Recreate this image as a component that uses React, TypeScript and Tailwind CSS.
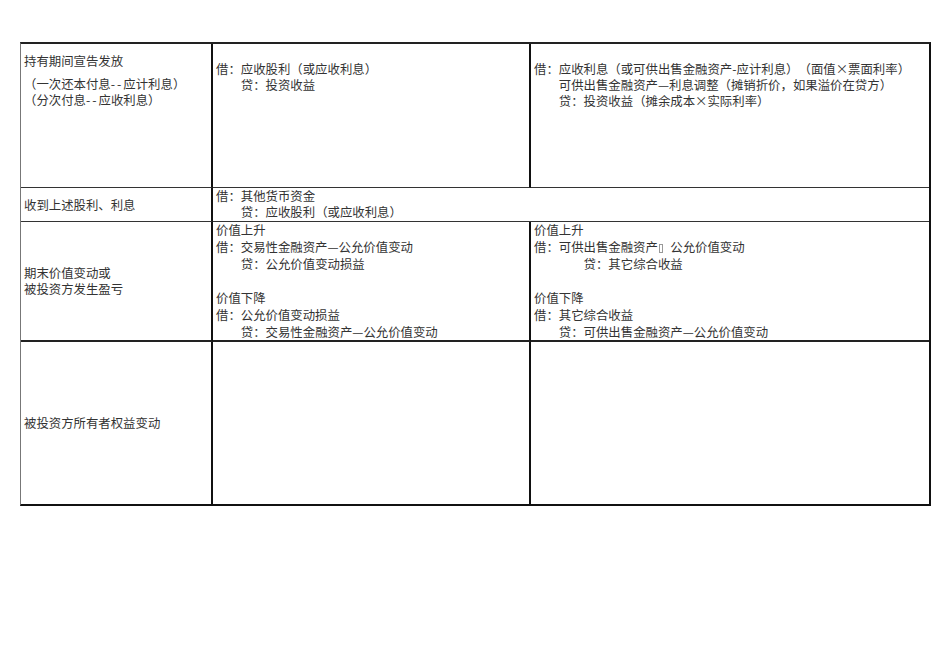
import React from "react";

function Tofu() {
  return (
    <span className="inline-flex w-[12.4px] items-center align-middle">
      <span className="ml-[1px] inline-block h-[9px] w-[4px] border border-[#999]" />
    </span>
  );
}

export default function App() {
  return (
    <div className="min-h-[672px] w-[950px] bg-white pt-[42px] pl-[20px] font-['Noto_Sans_CJK_SC','Noto_Sans_CJK_JP',sans-serif] text-[12.4px] text-[#333] [text-spacing-trim:space-all]">
      <div className="w-[911px] border-t-2 border-r-2 border-b-2 border-l border-t-[#222] border-r-[#111] border-b-[#111] border-l-[#777]">
        <div className="grid grid-cols-[192px_318px_398px] grid-rows-[144px_34px_120px_162px]">
          {/* Row 1 */}
          <div className="border-r-2 border-b border-r-[#111] border-b-[#333] pl-[3px] pt-[9px] leading-[16px]">
            <div>持有期间宣告发放</div>
            <div className="mt-[7px]">（一次还本付息<span className="tracking-[2px]">--</span>应计利息）</div>
            <div>（分次付息<span className="tracking-[2px]">--</span>应收利息）</div>
          </div>
          <div className="border-r-2 border-b border-r-[#111] border-b-[#333] pl-[3px] pt-[17px] leading-[16px]">
            <div>借：应收股利（或应收利息）</div>
            <div className="pl-[2em]">贷：投资收益</div>
          </div>
          <div className="border-b border-b-[#333] pl-[3px] pt-[17px] leading-[16px]">
            <div>借：应收利息（或可供出售金融资产-应计利息）（面值×票面利率）</div>
            <div className="pl-[2em]">可供出售金融资产—利息调整（摊销折价，如果溢价在贷方）</div>
            <div className="pl-[2em]">贷：投资收益（摊余成本×实际利率）</div>
          </div>

          {/* Row 2 */}
          <div className="flex items-center border-r-2 border-b border-r-[#111] border-b-[#333] pl-[3px] leading-[16px]">
            收到上述股利、利息
          </div>
          <div className="col-span-2 border-b border-b-[#333] pl-[3px] leading-[16px]">
            <div>借：其他货币资金</div>
            <div className="pl-[2em]">贷：应收股利（或应收利息）</div>
          </div>

          {/* Row 3 */}
          <div className="flex flex-col justify-center border-r-2 border-b-2 border-r-[#111] border-b-[#222] pl-[3px] leading-[16px]">
            <div>期末价值变动或</div>
            <div>被投资方发生盈亏</div>
          </div>
          <div className="border-r-2 border-b-2 border-r-[#111] border-b-[#222] pl-[3px] leading-[17px]">
            <div>价值上升</div>
            <div>借：交易性金融资产—公允价值变动</div>
            <div className="pl-[2em]">贷：公允价值变动损益</div>
            <div>&nbsp;</div>
            <div>价值下降</div>
            <div>借：公允价值变动损益</div>
            <div className="pl-[2em]">贷：交易性金融资产—公允价值变动</div>
          </div>
          <div className="border-b-2 border-b-[#222] pl-[3px] leading-[17px]">
            <div>价值上升</div>
            <div>
              借：可供出售金融资产
              <Tofu />
              公允价值变动
            </div>
            <div className="pl-[4em]">贷：其它综合收益</div>
            <div>&nbsp;</div>
            <div>价值下降</div>
            <div>借：其它综合收益</div>
            <div className="pl-[2em]">贷：可供出售金融资产—公允价值变动</div>
          </div>

          {/* Row 4 */}
          <div className="flex items-center border-r-2 border-r-[#111] pl-[3px] leading-[16px]">
            被投资方所有者权益变动
          </div>
          <div className="border-r-2 border-r-[#111]" />
          <div />
        </div>
      </div>
    </div>
  );
}
